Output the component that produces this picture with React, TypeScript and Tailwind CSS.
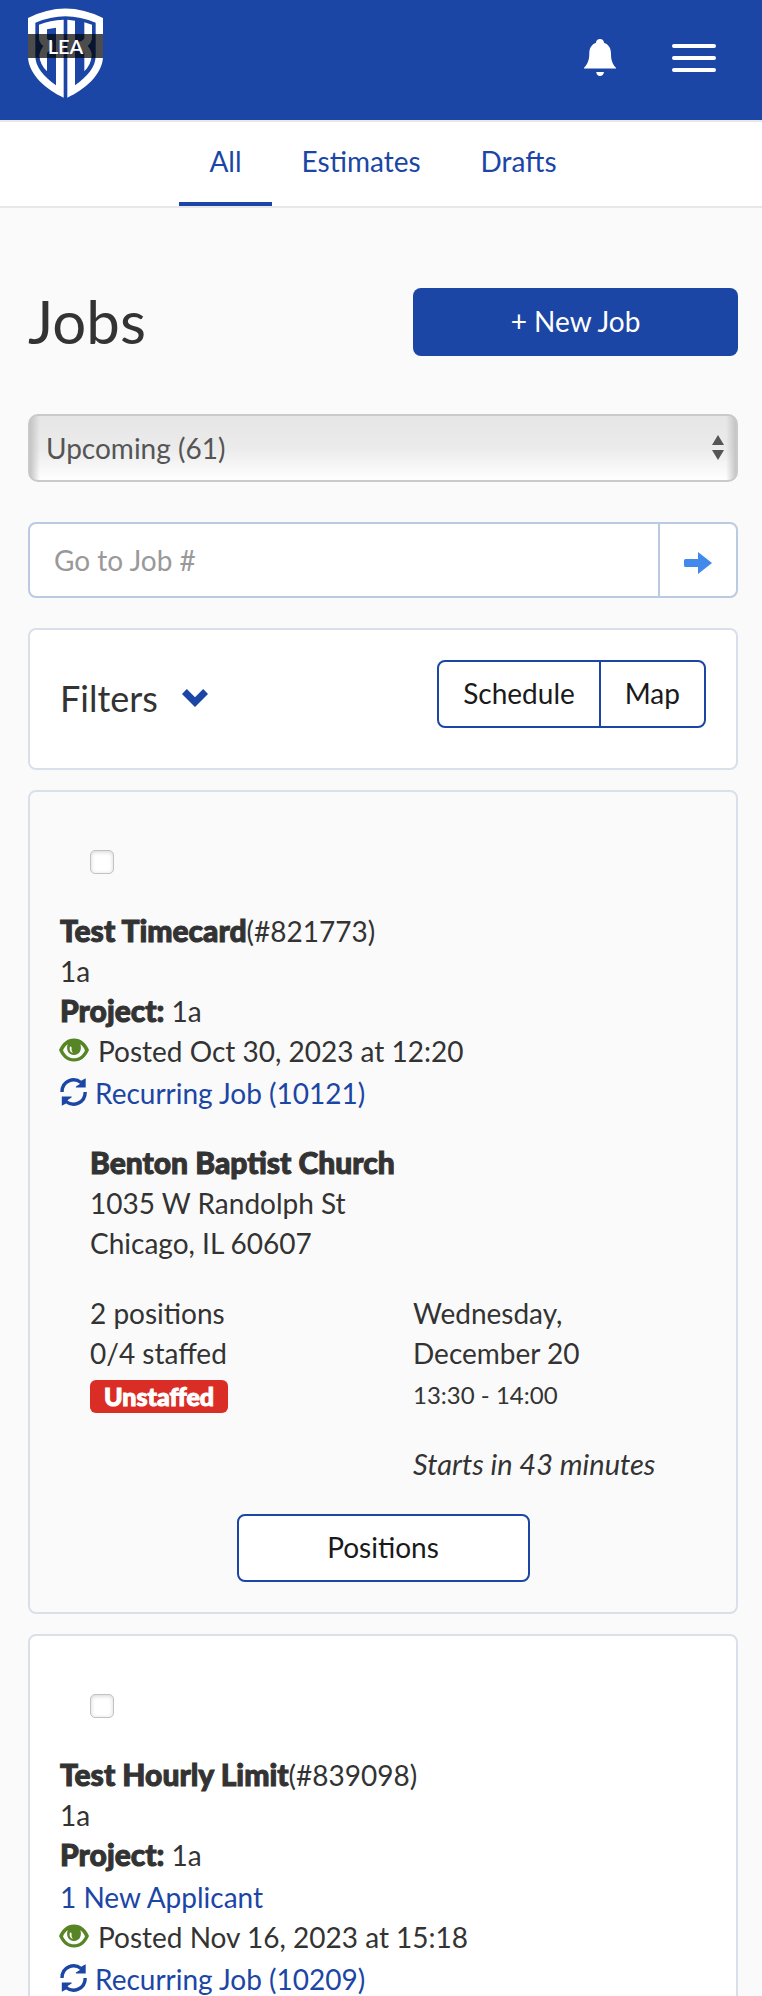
import type { ReactNode } from "react";

function Logo() {
  return (
    <a href="#home" aria-label="Home" className="relative block h-[90px] w-[75px] text-white">
      <svg viewBox="84 24 225 268" className="h-[90px] w-[75px]" fill="currentColor" aria-hidden="true">
        <path
          fillRule="evenodd"
          d="M84 53Q196-4 309 53V168C309 222 252 270 202 292V58L225 61V255C262 228 287 200 287 166V67Q196 28 106 67V166C106 200 131 228 168 255V82L141 87V115Q148 122 158 125V148Q146 150 141 158V213Q119 192 118 164Q120 149 130 137Q118 127 117 115V73Q150 60 191 58V292C141 270 84 222 84 168Z"
        />
        <path d="M253 66L276 73V115Q274 127 263 137Q274 149 275 164Q274 192 253 213V158Q248 150 235 148V125Q247 122 253 115Z" />
      </svg>
      <span className="absolute inset-x-0 top-[26px] flex h-6 items-center justify-center bg-black/70 text-[20px] leading-6 font-semibold">
        LEA
      </span>
    </a>
  );
}

function Strong({ children }: { children: ReactNode }) {
  return <b className="text-[30px] leading-none font-black [-webkit-text-stroke:1px_currentColor]">{children}</b>;
}

function EyeIcon() {
  return (
    <svg viewBox="0 0 30 24" className="h-6 w-[30px] shrink-0 text-[#578526]" aria-hidden="true">
      <path
        fill="currentColor"
        fillRule="evenodd"
        d="M0 12C3 5 8 .5 15 .5S27 5 30 12C27 19 22 23.500 15 23.500S3 19 0 12ZM4 12.500C6.500 17.500 10 20.300 15 20.300S23.500 17.500 26 12.500C25 9.800 23.500 7.600 21.300 6.200C23.200 11.500 20.500 17 15 17S6.800 11.500 8.700 6.200C6.500 7.600 5 9.800 4 12.500Z"
      />
      <path d="M10.800 9C10.300 12 11.300 14.500 14 14.700C12.800 13.500 12.200 12 12.700 10C12.700 8.500 11 8 10.800 9Z" fill="white" />
    </svg>
  );
}

function SyncIcon() {
  return (
    <svg viewBox="0 0 27 28" className="h-7 w-[27px] shrink-0" aria-hidden="true">
      <g fill="none" stroke="currentColor" strokeWidth="3.400">
        <path d="M2 14C2 2.500 14 -1 21 4.500" />
        <path d="M25.200 14C25.200 25.500 13 29 6 23.500" />
      </g>
      <path fill="currentColor" d="M25.700 .3V9.600H15.900V8.600L19.500 6.200L21.500 2.500ZM1.800 27.700V18.400H11.600V19.400L8 21.800L6 25.500Z" />
    </svg>
  );
}

function PostedLine({ children }: { children: ReactNode }) {
  return (
    <p className="flex items-start">
      <span className="-ml-px pt-[7px] pr-[9px]">
        <EyeIcon />
      </span>
      {children}
    </p>
  );
}

function RecurringLine({ number }: { number: string }) {
  return (
    <p className="pt-0.5">
      <a href="#recurring" className="flex w-fit items-start gap-2 text-[#1b46a5]">
        <span className="h-10 pt-[5px]">
          <SyncIcon />
        </span>
        Recurring Job ({number})
      </a>
    </p>
  );
}

function JobCard({
  title,
  id,
  applicants,
  posted,
  recurring,
  className,
  children,
}: {
  title: string;
  id: string;
  applicants?: string;
  posted: string;
  recurring: string;
  className: string;
  children?: ReactNode;
}) {
  return (
    <article className={`mt-5 rounded-lg border-2 border-[#dae0ea] px-[30px] pt-[58px] pb-[30px] ${className}`}>
      <input
        type="checkbox"
        aria-label={`Select ${title}`}
        className="ml-[30px] block size-6 appearance-none rounded-[5px] border border-[#c2c2c2] bg-white shadow-[inset_0_1px_4px_#d4d4d4] checked:bg-[#1b46a5]"
      />
      <div className="mt-[37px]">
        <h2 className="text-[28px] leading-10 font-normal">
          <Strong>{title}</Strong>({id})
        </h2>
        <p>1a</p>
        <p>
          <Strong>Project:</Strong> 1a
        </p>
        {applicants && (
          <p className="pt-0.5">
            <a href="#applicants" className="text-[#1b46a5]">
              {applicants}
            </a>
          </p>
        )}
        <PostedLine>{posted}</PostedLine>
        <RecurringLine number={recurring} />
      </div>
      {children}
    </article>
  );
}

const tabs = ["All", "Estimates", "Drafts"];

export default function App() {
  return (
    <div className="flex h-screen flex-col bg-[#fafafa] font-['Lato',sans-serif] text-[28px] leading-10 text-[#333]">
      <header className="flex h-[122px] shrink-0 items-start justify-between border-b-2 border-[#e7e7e7] bg-[#1b46a5] bg-clip-padding pt-2 pr-[46px] pl-7">
        <Logo />
        <div className="flex items-center gap-14 pt-[31px]">
          <button type="button" aria-label="Notifications">
            <svg viewBox="0 0 32 37" className="h-[37px] w-8 text-white" fill="currentColor" aria-hidden="true">
              <path d="M12 3.800C12 1.500 13.700 0 16 0S20 1.500 20 3.800C24.500 5.500 27 9 27 14.500C27 21.500 28.500 25 32 28.800V29.500H0V28.800C3.500 25 5.300 21.500 5.300 14.500C5.300 9 7.700 5.500 12 3.800ZM12.200 33H20C19.600 35.500 18 37 16 37S12.600 35.500 12.200 33Z" />
            </svg>
          </button>
          <button type="button" aria-label="Menu" className="flex w-11 flex-col gap-2">
            <span className="h-1 w-full rounded-full bg-white" />
            <span className="h-1 w-full rounded-full bg-white" />
            <span className="h-1 w-full rounded-full bg-white" />
          </button>
        </div>
      </header>

      <nav className="flex h-[86px] shrink-0 justify-center border-b-2 border-[#e7e7e7] bg-white pl-1">
        {tabs.map((tab) => (
          <a
            key={tab}
            href={`#${tab.toLowerCase()}`}
            className={`border-b-4 px-[30px] pt-[19px] text-[#1b46a5] ${tab === "All" ? "border-[#1b46a5]" : "border-transparent"}`}
          >
            {tab}
          </a>
        ))}
      </nav>

      <main className="grow overflow-y-auto pt-20 pr-6 pl-7 [scrollbar-width:none]">
        <div className="grid h-[68px] grid-cols-2 items-center">
          <h1 className="pb-0.5 text-[60px] leading-[66px]">Jobs</h1>
          <button type="button" className="ml-[30px] h-[68px] rounded-lg bg-[#1b46a5] pb-0.5 text-white">
            + New Job
          </button>
        </div>

        <div className="relative mt-[58px]">
          <select
            aria-label="Job status"
            className="block h-[68px] w-full appearance-none rounded-[10px] border-2 border-[#c9c9c9] bg-[linear-gradient(to_right,#c4c4c4,transparent_10px,transparent_calc(100%-10px),#c4c4c4),linear-gradient(#e6e6e6,#ebebeb_50%,#ffffff)] px-4 text-[#555]"
          >
            <option>Upcoming (61)</option>
          </select>
          <svg viewBox="0 0 12 25" className="pointer-events-none absolute top-[21px] right-[14px] h-[25px] w-3 text-[#555]" fill="currentColor" aria-hidden="true">
            <path d="M6 0L12 10H0ZM0 15H12L6 25Z" />
          </svg>
        </div>

        <form className="mt-10 flex h-[76px] overflow-hidden rounded-lg border-2 border-[#bacbe1] bg-white">
          <input
            type="text"
            aria-label="Go to job number"
            placeholder="Go to Job #"
            className="min-w-0 grow px-6 outline-none placeholder:text-[#999]"
          />
          <button type="button" aria-label="Go" className="flex w-[78px] items-center justify-center border-l-2 border-[#bacbe1] pt-1.5">
            <svg viewBox="0 0 28 22" className="h-[22px] w-7 text-[#4189ea]" fill="currentColor" aria-hidden="true">
              <path d="M1.500 7H14V0L28 11L14 22V15H1.500Q0 15 0 13.500V8.500Q0 7 1.500 7Z" />
            </svg>
          </button>
        </form>

        <section className="mt-[30px] flex h-[142px] items-start justify-between rounded-lg border-2 border-[#dae0ea] bg-white px-[30px] pt-[30px]">
          <button type="button" className="mt-[15px] flex items-center gap-6 text-[36px] leading-[46px]">
            Filters
            <svg viewBox="0 0 26 18" className="h-[18px] w-[26px] text-[#1b46a5]" fill="currentColor" aria-hidden="true">
              <path d="M0 5L4.800 0L13 8.200L21.200 0L26 5L13 18Z" />
            </svg>
          </button>
          <div className="flex h-[68px] rounded-lg border-2 border-[#1b46a5] text-[#1a1a1a]">
            <button type="button" className="px-6 pb-0.5">
              Schedule
            </button>
            <button type="button" className="border-l-2 border-[#1b46a5] px-6 pb-0.5">
              Map
            </button>
          </div>
        </section>

        <JobCard title="Test Timecard" id="#821773" posted="Posted Oct 30, 2023 at 12:20" recurring="10121" className="bg-[#fafafa]">
          <address className="mt-[30px] pl-[30px] not-italic">
            <Strong>Benton Baptist Church</Strong>
            <br />
            1035 W Randolph St
            <br />
            Chicago, IL 60607
          </address>
          <div className="mt-[30px] grid grid-cols-2">
            <div className="pl-[30px]">
              <p>2 positions</p>
              <p>0/4 staffed</p>
              <p className="mt-[7px] h-[33px] w-fit rounded-md bg-[#d92d25] px-[14px] text-[25px] leading-8 font-black text-white [-webkit-text-stroke:1px_currentColor]">
                Unstaffed
              </p>
            </div>
            <div className="pl-[30px]">
              <p>
                Wednesday,
                <br />
                December 20
              </p>
              <p className="pt-0.5 text-[24px]">13:30 - 14:00</p>
              <p className="mt-[29px] text-[29px] italic">Starts in 43 minutes</p>
            </div>
          </div>
          <button type="button" className="mx-auto mt-[30px] block h-[68px] w-[293px] rounded-lg border-2 border-[#1b46a5] bg-white pb-0.5 text-[#1a1a1a]">
            Positions
          </button>
        </JobCard>

        <JobCard
          title="Test Hourly Limit"
          id="#839098"
          applicants="1 New Applicant"
          posted="Posted Nov 16, 2023 at 15:18"
          recurring="10209"
          className="bg-white"
        />
      </main>
    </div>
  );
}
